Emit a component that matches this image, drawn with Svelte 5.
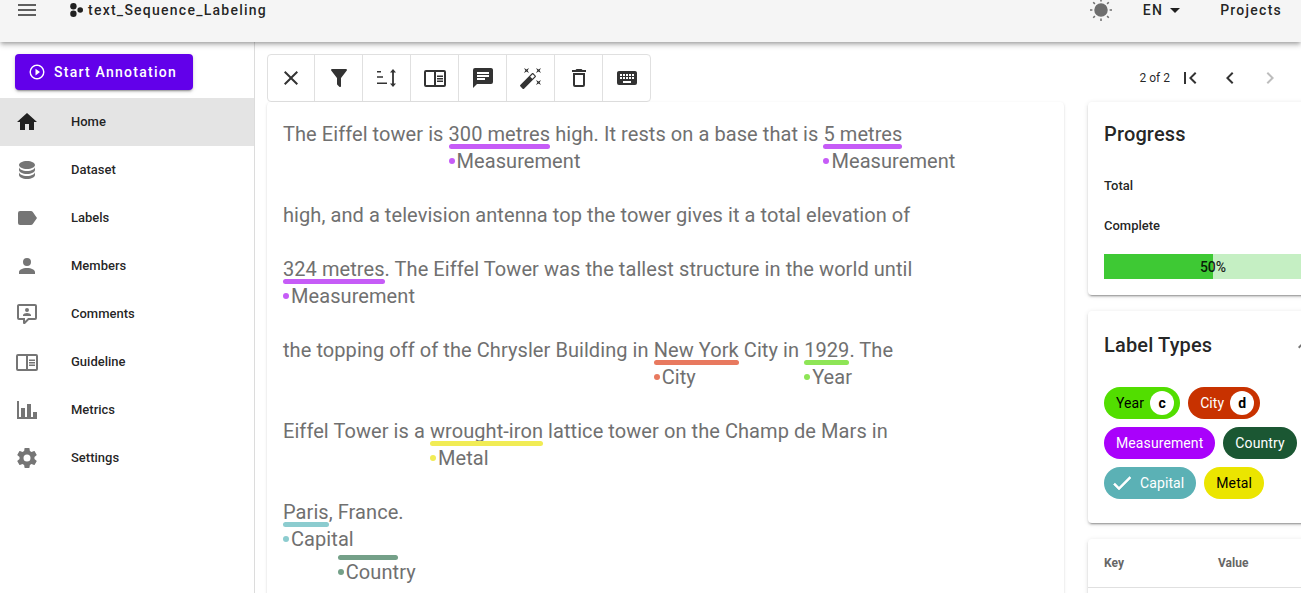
<script>
  const icons = {
    menu: 'M3,6H21V8H3V6M3,11H21V13H3V11M3,16H21V18H3V16Z',
    home: 'M10,20V14H14V20H19V12H22L12,3L2,12H5V20H10Z',
    database: 'M12,3C7.58,3 4,4.79 4,7C4,9.21 7.58,11 12,11C16.42,11 20,9.21 20,7C20,4.79 16.42,3 12,3M4,9V12C4,14.21 7.58,16 12,16C16.42,16 20,14.21 20,12V9C20,11.21 16.42,13 12,13C7.58,13 4,11.21 4,9M4,14V17C4,19.21 7.58,21 12,21C16.42,21 20,19.21 20,17V14C20,16.21 16.42,18 12,18C7.58,18 4,16.21 4,14Z',
    label: 'M17.63,5.84C17.27,5.33 16.67,5 16,5H5A2,2 0 0,0 3,7V17A2,2 0 0,0 5,19H16C16.67,19 17.27,18.66 17.63,18.15L22,12L17.63,5.84Z',
    account: 'M12,4A4,4 0 0,1 16,8A4,4 0 0,1 12,12A4,4 0 0,1 8,8A4,4 0 0,1 12,4M12,14C16.42,14 20,15.79 20,18V20H4V18C4,15.79 7.58,14 12,14Z',
    comment: 'M9,22A1,1 0 0,1 8,21V18H4A2,2 0 0,1 2,16V4C2,2.89 2.9,2 4,2H20A2,2 0 0,1 22,4V16A2,2 0 0,1 20,18H13.9L10.2,21.71C10,21.9 9.75,22 9.5,22V22H9M10,16V19.08L13.08,16H20V4H4V16H10M16,14H8V13C8,11.67 10.67,11 12,11C13.33,11 16,11.67 16,13V14M12,6A2,2 0 0,1 14,8A2,2 0 0,1 12,10A2,2 0 0,1 10,8A2,2 0 0,1 12,6Z',
    book: 'M21,4H3A2,2 0 0,0 1,6V19A2,2 0 0,0 3,21H21A2,2 0 0,0 23,19V6A2,2 0 0,0 21,4M3,19V6H11V19H3M21,19H13V6H21V19M14,9.5H20V11H14V9.5M14,12H20V13.5H14V12M14,14.5H20V16H14V14.5Z',
    chart: 'M22,21H2V3H4V19H6V10H10V19H12V6H16V19H18V14H22V21Z',
    cog: 'M12,15.5A3.5,3.5 0 0,1 8.5,12A3.5,3.5 0 0,1 12,8.5A3.5,3.5 0 0,1 15.5,12A3.5,3.5 0 0,1 12,15.5M19.43,12.97C19.47,12.65 19.5,12.33 19.5,12C19.5,11.67 19.47,11.34 19.43,11L21.54,9.37C21.73,9.22 21.78,8.95 21.66,8.73L19.66,5.27C19.54,5.05 19.27,4.96 19.05,5.05L16.56,6.05C16.04,5.66 15.5,5.32 14.87,5.07L14.5,2.42C14.46,2.18 14.25,2 14,2H10C9.75,2 9.54,2.18 9.5,2.42L9.13,5.07C8.5,5.32 7.96,5.66 7.44,6.05L4.95,5.05C4.73,4.96 4.46,5.05 4.34,5.27L2.34,8.73C2.21,8.95 2.27,9.22 2.46,9.37L4.57,11C4.53,11.34 4.5,11.67 4.5,12C4.5,12.33 4.53,12.65 4.57,12.97L2.46,14.63C2.27,14.78 2.21,15.05 2.34,15.27L4.34,18.73C4.46,18.95 4.73,19.03 4.95,18.95L7.44,17.94C7.96,18.34 8.5,18.68 9.13,18.93L9.5,21.58C9.54,21.82 9.75,22 10,22H14C14.25,22 14.46,21.82 14.5,21.58L14.87,18.93C15.5,18.67 16.04,18.34 16.56,17.94L19.05,18.95C19.27,19.03 19.54,18.95 19.66,18.73L21.66,15.27C21.78,15.05 21.73,14.78 21.54,14.63L19.43,12.97Z',
    play: 'M12,20C7.59,20 4,16.41 4,12C4,7.59 7.59,4 12,4C16.41,4 20,7.59 20,12C20,16.41 16.41,20 12,20M12,2A10,10 0 0,0 2,12A10,10 0 0,0 12,22A10,10 0 0,0 22,12A10,10 0 0,0 12,2M10,16.5L16,12L10,7.5V16.5Z',
    close: 'M19,6.41L17.59,5L12,10.59L6.41,5L5,6.41L10.59,12L5,17.59L6.41,19L12,13.41L17.59,19L19,17.59L13.41,12L19,6.41Z',
    filter: 'M14,12V19.88C14.04,20.18 13.94,20.5 13.71,20.71C13.32,21.1 12.69,21.1 12.3,20.71L10.29,18.7C10.06,18.47 9.96,18.16 10,17.87V12H9.97L4.21,4.62C3.87,4.19 3.95,3.56 4.38,3.22C4.57,3.08 4.78,3 5,3H19C19.22,3 19.43,3.08 19.62,3.22C20.05,3.56 20.13,4.19 19.79,4.62L14.03,12H14Z',
    height: 'M2,5H6V6.5H2V5M2,10.3H8V11.8H2V10.3M2,16.5H12V18H2V16.5M18,3L21,6.5H18.9V17.5H21L18,21L15,17.5H17.1V6.5H15L18,3Z',
    message: 'M20,2H4A2,2 0 0,0 2,4V22L6,18H20A2,2 0 0,0 22,16V4C22,2.89 21.1,2 20,2M6,9H18V11H6M14,14H6V12H14M18,8H6V6H18',
    wand: 'M7.5,5.6L5,7L6.4,4.5L5,2L7.5,3.4L10,2L8.6,4.5L10,7L7.5,5.6M19.5,15.4L22,14L20.6,16.5L22,19L19.5,17.6L17,19L18.4,16.5L17,14L19.5,15.4M22,2L20.6,4.5L22,7L19.5,5.6L17,7L18.4,4.5L17,2L19.5,3.4L22,2M13.34,12.78L15.78,10.34L13.66,8.22L11.22,10.66L13.34,12.78M14.37,7.29L16.71,9.63C17.1,10 17.1,10.65 16.71,11.04L5.04,22.71C4.65,23.1 4,23.1 3.63,22.71L1.29,20.37C0.9,20 0.9,19.35 1.29,18.96L12.96,7.29C13.35,6.9 14,6.9 14.37,7.29Z',
    trash: 'M6,19A2,2 0 0,0 8,21H16A2,2 0 0,0 18,19V7H6V19M8,9H16V19H8V9M15.5,4L14.5,3H9.5L8.5,4H5V6H19V4H15.5Z',
    keyboard: 'M19,10H17V8H19M19,13H17V11H19M16,10H14V8H16M16,13H14V11H16M16,17H8V15H16M7,10H5V8H7M7,13H5V11H7M8,11H10V13H8M8,8H10V10H8M11,11H13V13H11M11,8H13V10H11M20,5H4C2.89,5 2,5.89 2,7V17A2,2 0 0,0 4,19H20A2,2 0 0,0 22,17V7C22,5.89 21.1,5 20,5Z',
    first: 'M18.41,16.59L13.82,12L18.41,7.41L17,6L11,12L17,18L18.41,16.59M6,6H8V18H6V6Z',
    left: 'M15.41,16.58L10.83,12L15.41,7.41L14,6L8,12L14,18L15.41,16.58Z',
    right: 'M8.59,16.58L13.17,12L8.59,7.41L10,6L16,12L10,18L8.59,16.58Z',
    down: 'M7,10L12,15L17,10H7Z',
    up: 'M7.41,15.41L12,10.83L16.59,15.41L18,14L12,8L6,14L7.41,15.41Z',
    check: 'M21,7L9,19L3.5,13.5L4.91,12.09L9,16.17L19.59,5.59L21,7Z'
  };

  const nav = [
    ['Home', 'home'],
    ['Dataset', 'database'],
    ['Labels', 'label'],
    ['Members', 'account'],
    ['Comments', 'comment'],
    ['Guideline', 'book'],
    ['Metrics', 'chart'],
    ['Settings', 'cog']
  ];

  const tools = ['close', 'filter', 'height', 'book', 'message', 'wand', 'trash', 'keyboard'];

  const tones = {
    Measurement: '#c65cf7',
    City: '#e8795f',
    Year: '#8ee556',
    Metal: '#f1ec55',
    Capital: '#8ccccf',
    Country: '#74a088'
  };

  // a segment is plain text, or [text, label] for an entity
  const lines = [
    { tall: true, parts: ['The Eiffel tower is ', ['300 metres', 'Measurement'], ' high. It rests on a base that is ', ['5 metres', 'Measurement']] },
    { parts: ['high, and a television antenna top the tower gives it a total elevation of'] },
    { tall: true, parts: [['324 metres', 'Measurement'], '. The Eiffel Tower was the tallest structure in the world until'] },
    { tall: true, parts: ['the topping off of the Chrysler Building in ', ['New York', 'City'], ' City in ', ['1929', 'Year'], '. The'] },
    { tall: true, parts: ['Eiffel Tower is a ', ['wrought-iron', 'Metal'], ' lattice tower on the Champ de Mars in'] },
    { tall: true, parts: [['Paris', 'Capital'], ', ', ['France', 'Country', true], '.'] }
  ];

  const chips = [
    { name: 'Year', bg: '#52de00', fg: '#000', key: 'c' },
    { name: 'City', bg: '#c83200', fg: '#fff', key: 'd' },
    { name: 'Measurement', bg: '#a901fb', fg: '#fff' },
    { name: 'Country', bg: '#1b5733', fg: '#fff' },
    { name: 'Capital', bg: '#5bb1b5', fg: '#fff', checked: true },
    { name: 'Metal', bg: '#ebe500', fg: '#000' }
  ];
</script>

{#snippet icon(name)}
  <svg class="icon" viewBox="0 0 24 24"><path d={icons[name]} /></svg>
{/snippet}

<div class="page">
  <header>
    <button class="burger">{@render icon('menu')}</button>
    <svg class="logo" viewBox="0 0 13 14">
      <circle cx="3.4" cy="3.2" r="3.2" /><circle cx="3.4" cy="10.8" r="3.2" /><circle cx="10.2" cy="7" r="2.8" />
    </svg>
    <span class="title">text_Sequence_Labeling</span>
    <span class="spacer"></span>
    <svg class="sun" viewBox="0 0 24 24">
      <circle cx="12" cy="12" r="6" />
      <path d="M12 1v2.4M12 20.6V23M1 12h2.4M20.6 12H23M4.2 4.2l1.7 1.7M18.1 18.1l1.7 1.7M4.2 19.8l1.7-1.7M18.1 5.9l1.7-1.7" />
    </svg>
    <span class="lang">EN {@render icon('down')}</span>
    <span class="projects">Projects</span>
  </header>

  <div class="body">
    <nav>
      <div class="start-wrap">
        <button class="start">{@render icon('play')}<span>Start Annotation</span></button>
      </div>
      {#each nav as [text, ic], i}
        <div class="nav-item" class:active={i === 0}>
          {@render icon(ic)}
          <span>{text}</span>
        </div>
      {/each}
    </nav>

    <main>
      <div class="top-row">
        <div class="toolbar">
          {#each tools as t}
            <button class="tool">{@render icon(t)}</button>
          {/each}
        </div>
        <div class="pager">
          <span class="count">2 of 2</span>
          <button class="page-btn">{@render icon('first')}</button>
          <button class="page-btn">{@render icon('left')}</button>
          <button class="page-btn off">{@render icon('right')}</button>
        </div>
      </div>

      <div class="columns">
        <section class="text-card">
          {#each lines as line}
            <div class="line" class:tall={line.tall}>
              {#each line.parts as part}
                {#if typeof part === 'string'}{part}{:else}<span class="entity" class:second={part[2]} style="--tone: {tones[part[1]]}">{part[0]}<i class="bar"></i><span class="tag"><i class="dot"></i>{part[1]}</span></span>{/if}
              {/each}
            </div>
          {/each}
        </section>

        <aside>
          <section class="card progress">
            <h2>Progress</h2>
            <div class="stat">Total</div>
            <div class="stat">Complete</div>
            <div class="bar-track">
              <div class="bar-fill"></div>
              <span>50%</span>
            </div>
          </section>

          <section class="card types">
            <div class="types-head">
              <h2>Label Types</h2>
              {@render icon('up')}
            </div>
            <div class="chips">
              {#each chips as c}
                <span class="chip" style="background: {c.bg}; color: {c.fg}">
                  {#if c.checked}{@render icon('check')}{/if}
                  {c.name}
                  {#if c.key}<b class="key">{c.key}</b>{/if}
                </span>
              {/each}
            </div>
          </section>

          <section class="card meta">
            <div class="meta-head"><span>Key</span><span>Value</span></div>
          </section>
        </aside>
      </div>
    </main>
  </div>
</div>

<style>
  :global(body) {
    margin: 0;
    font-family: Roboto, "Liberation Sans", sans-serif;
    background: #fff;
  }

  .page {
    width: 100vw;
    height: 100vh;
    overflow: hidden;
    display: flex;
    flex-direction: column;
    color: rgba(0, 0, 0, 0.87);
  }

  button {
    border: none;
    background: none;
    padding: 0;
    font: inherit;
    color: inherit;
    display: flex;
    align-items: center;
    justify-content: center;
  }

  .icon {
    width: 24px;
    height: 24px;
    flex: none;
    fill: currentColor;
  }

  header {
    position: relative;
    z-index: 2;
    flex: none;
    height: 42px;
    box-sizing: border-box;
    padding-left: 15px;
    display: flex;
    align-items: flex-start;
    background: #f5f5f5;
    box-shadow: 0 2px 4px -1px rgba(0, 0, 0, 0.3), 0 4px 5px rgba(0, 0, 0, 0.14);
    font-size: 14px;
    font-weight: 500;
    letter-spacing: 1.25px;
    line-height: 20px;
  }

  .burger {
    height: 20px;
    color: #5f5f5f;
    margin-right: 31px;
  }

  .logo {
    width: 13px;
    height: 14px;
    margin: 3px 5px 0 0;
    fill: #212121;
  }

  .spacer {
    flex: 1;
  }

  .sun {
    width: 24px;
    height: 24px;
    margin: -2px 30px 0 0;
    fill: #6e6e6e;
    stroke: #6e6e6e;
    stroke-width: 1.5;
  }

  .lang {
    display: flex;
    align-items: center;
    height: 20px;
    margin-right: 33px;
  }

  .projects {
    margin-right: 19px;
  }

  .body {
    flex: 1;
    display: flex;
    min-height: 0;
  }

  nav {
    flex: none;
    width: 254px;
    border-right: 1px solid #dcdcdc;
    box-sizing: content-box;
  }

  .start-wrap {
    padding: 12px 0 8px 15px;
  }

  .start {
    width: 178px;
    height: 36px;
    justify-content: flex-start;
    padding-left: 13px;
    gap: 8px;
    background: #6200ea;
    color: #fff;
    border-radius: 4px;
    font-size: 14px;
    font-weight: 500;
    letter-spacing: 1.25px;
    box-shadow: 0 3px 1px -2px rgba(0, 0, 0, 0.2), 0 2px 2px rgba(0, 0, 0, 0.14), 0 1px 5px rgba(0, 0, 0, 0.12);
  }

  .start .icon {
    width: 18px;
    height: 18px;
  }

  .nav-item {
    height: 48px;
    display: flex;
    align-items: center;
    padding-left: 15px;
    gap: 32px;
    font-size: 13px;
    font-weight: 500;
  }

  .nav-item span {
    margin-bottom: 2px;
  }

  .nav-item .icon {
    color: #757575;
  }

  .nav-item.active {
    background: #e4e4e4;
  }

  .nav-item.active .icon {
    color: #212121;
  }

  main {
    flex: none;
    width: 1071px;
    padding: 12px 0 0 12px;
    box-sizing: border-box;
  }

  .top-row {
    width: 1023px;
    display: flex;
    justify-content: space-between;
  }

  .toolbar {
    display: flex;
    border: 1px solid #e0e0e0;
    border-radius: 4px;
    box-sizing: border-box;
    height: 48px;
  }

  .tool {
    width: 48px;
    height: 46px;
    color: #333;
    border-left: 1px solid #e0e0e0;
    box-sizing: border-box;
  }

  .tool:first-child {
    width: 46px;
    border-left: none;
  }

  .pager {
    display: flex;
    align-items: center;
    font-size: 12px;
  }

  .count {
    letter-spacing: 0;
  }

  .page-btn {
    width: 40px;
    height: 40px;
    color: #333;
  }

  .page-btn.off {
    color: #bdbdbd;
  }

  .columns {
    display: flex;
    gap: 24px;
    align-items: flex-start;
  }

  .text-card {
    flex: none;
    width: 797px;
    height: 600px;
    box-sizing: border-box;
    padding: 18.5px 16px 0;
    border-radius: 4px;
    background: #fff;
    box-shadow: 0 2px 1px -1px rgba(0, 0, 0, 0.2), 0 1px 1px rgba(0, 0, 0, 0.14), 0 1px 3px rgba(0, 0, 0, 0.12);
    font-size: 20px;
    letter-spacing: 0.07px;
    line-height: 27px;
    color: #707070;
  }

  .line {
    white-space: pre;
    padding-bottom: 27px;
  }

  .line.tall {
    padding-bottom: 54px;
  }

  .entity {
    position: relative;
    display: inline-block;
  }

  .bar {
    position: absolute;
    left: 0;
    right: 0;
    top: 23.5px;
    height: 5px;
    border-radius: 2.5px;
    background: var(--tone);
  }

  .tag {
    position: absolute;
    left: 0;
    top: 27px;
    display: flex;
    align-items: center;
  }

  .dot {
    width: 6px;
    height: 6px;
    margin-right: 2px;
    border-radius: 50%;
    background: var(--tone);
  }

  .second .bar {
    top: 56px;
  }

  .second .tag {
    top: 60px;
  }

  aside {
    flex: none;
    width: 250px;
    display: flex;
    flex-direction: column;
    gap: 16px;
  }

  .card {
    background: #fff;
    border-radius: 4px;
    box-sizing: border-box;
    padding: 16px;
    box-shadow: 0 3px 1px -2px rgba(0, 0, 0, 0.2), 0 2px 2px rgba(0, 0, 0, 0.14), 0 1px 5px rgba(0, 0, 0, 0.12);
  }

  h2 {
    margin: 0;
    font-size: 20px;
    font-weight: 500;
    line-height: 32px;
    letter-spacing: 0.15px;
  }

  .progress {
    height: 193px;
  }

  .stat {
    height: 40px;
    display: flex;
    align-items: center;
    font-size: 13px;
    font-weight: 500;
  }

  .progress h2 {
    margin-bottom: 15px;
  }

  .bar-track {
    position: relative;
    height: 25px;
    margin-top: 9px;
    background: #c5efc3;
  }

  .bar-fill {
    width: 50%;
    height: 100%;
    background: #3ec934;
  }

  .bar-track span {
    position: absolute;
    inset: 0;
    display: flex;
    align-items: center;
    justify-content: center;
    font-size: 14px;
    font-weight: 500;
  }

  .types {
    height: 212px;
  }

  .types-head {
    display: flex;
    align-items: center;
    justify-content: space-between;
    margin-top: 2px;
    padding-right: 6px;
    color: #757575;
  }

  .types-head h2 {
    color: rgba(0, 0, 0, 0.87);
  }

  .chips {
    display: flex;
    flex-wrap: wrap;
    gap: 8px;
    margin-top: 26px;
  }

  .chip {
    display: inline-flex;
    align-items: center;
    height: 32px;
    padding: 0 12px;
    border-radius: 16px;
    font-size: 14px;
    letter-spacing: 0.1px;
    white-space: nowrap;
  }

  .chip .icon {
    width: 24px;
    height: 24px;
    margin: 0 6px 0 -6px;
    stroke: currentColor;
    stroke-width: 0.6;
  }

  .key {
    width: 24px;
    height: 24px;
    margin: 0 -6px 0 6px;
    border-radius: 50%;
    background: #fff;
    color: #000;
    display: flex;
    align-items: center;
    justify-content: center;
    font-size: 14px;
    font-weight: 700;
  }

  .meta {
    height: 200px;
    padding: 0;
  }

  .meta-head {
    height: 48px;
    display: flex;
    align-items: center;
    border-bottom: 1px solid #e0e0e0;
    padding-left: 16px;
    font-size: 12px;
    font-weight: 700;
    color: #666;
  }

  .meta-head span:first-child {
    width: 114px;
  }
</style>
